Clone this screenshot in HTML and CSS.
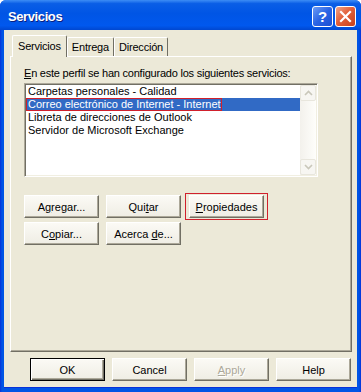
FILE: index.html
```html
<!DOCTYPE html>
<html lang="es">
<head>
    <meta charset="UTF-8">
    <title>Servicios</title>
    <link rel="stylesheet" href="styles.css">
</head>
<body>
    <div class="window">
        <!-- Title bar -->
        <div class="titlebar">
            <span class="title">Servicios</span>
            <div class="caption-buttons">
                <span class="cap-btn help">?</span>
                <span class="cap-btn close">
                    <svg width="13" height="13" viewBox="0 0 13 13">
                        <path d="M2 2 L11 11 M11 2 L2 11" stroke="#fff" stroke-width="2.2" stroke-linecap="square"/>
                    </svg>
                </span>
            </div>
        </div>

        <div class="client">
            <!-- Tabs -->
            <div class="tabs">
                <span class="tab active">Servicios</span>
                <span class="tab">Entrega</span>
                <span class="tab">Dirección</span>
            </div>

            <div class="panel">
                <div class="label"><u>E</u>n este perfil se han configurado los siguientes servicios:</div>

                <div class="listbox">
                    <ul class="items">
                        <li>Carpetas personales - Calidad</li>
                        <li class="selected"><span class="marked">Correo electrónico de Internet - Internet</span></li>
                        <li>Libreta de direcciones de Outlook</li>
                        <li>Servidor de Microsoft Exchange</li>
                    </ul>
                    <div class="scrollbar">
                        <span class="arrow">
                            <svg width="9" height="6" viewBox="0 0 9 6"><path d="M1 5 L4.5 1.5 L8 5" fill="none" stroke="#c9c7ba" stroke-width="1.6"/></svg>
                        </span>
                        <span class="track"></span>
                        <span class="arrow">
                            <svg width="9" height="6" viewBox="0 0 9 6"><path d="M1 1 L4.5 4.5 L8 1" fill="none" stroke="#c9c7ba" stroke-width="1.6"/></svg>
                        </span>
                    </div>
                </div>

                <div class="btn-row first">
                    <button>A<u>g</u>regar...</button>
                    <button>Qui<u>t</u>ar</button>
                    <button class="marked-btn"><u>P</u>ropiedades</button>
                </div>
                <div class="btn-row">
                    <button>C<u>o</u>piar...</button>
                    <button>Acerca <u>d</u>e...</button>
                </div>
            </div>

            <!-- Dialog buttons -->
            <div class="footer">
                <button class="default">OK</button>
                <button>Cancel</button>
                <button class="disabled"><u>A</u>pply</button>
                <button>Help</button>
            </div>
        </div>
    </div>
</body>
</html>
```

FILE: styles.css
```css
/* General styling */
* {
    box-sizing: border-box;
}

body {
    margin: 0;
    font-family: "Liberation Sans", Arial, sans-serif;
    font-size: 11px;
    color: #000;
    background: #fff;
}

/* Window frame */
.window {
    width: 361px;
    height: 392px;
    display: flex;
    flex-direction: column;
    background: linear-gradient(90deg, #0831d9 0px, #0055e5 2px, #0055e5 359px, #0831d9 361px);
    border-radius: 6px 6px 0 0;
    overflow: hidden;
}

.titlebar {
    height: 30px;
    display: flex;
    align-items: center;
    justify-content: space-between;
    padding: 2px 5px 0 8px;
    background: linear-gradient(180deg, #3d8df5 0%, #0a5ee6 12%, #0055e5 45%, #0058ee 85%, #0047d0 100%);
}

.title {
    color: #fff;
    font-weight: bold;
    font-size: 13px;
    letter-spacing: -0.4px;
    text-shadow: 1px 1px #0a1f80;
}

.caption-buttons {
    display: flex;
    gap: 2px;
}

.cap-btn {
    width: 21px;
    height: 21px;
    border: 1px solid #fff;
    border-radius: 3px;
    display: flex;
    align-items: center;
    justify-content: center;
    color: #fff;
    font-weight: bold;
    font-size: 15px;
}

.help {
    background: linear-gradient(135deg, #6c9cf5 0%, #2a64e4 50%, #1c4fd3 100%);
}

.close {
    background: linear-gradient(135deg, #f0a488 0%, #e2603a 45%, #c7401c 100%);
}

/* Client area */
.client {
    flex: 1;
    margin: 0 4px 4px 4px;
    background: #ece9d8;
    padding: 5px 5px 0 6px;
    display: flex;
    flex-direction: column;
    border-bottom: 1px solid #0831d9;
}

/* Tabs */
.tabs {
    display: flex;
    align-items: flex-end;
    height: 21px;
    padding-left: 2px;
}

.tab {
    height: 19px;
    padding: 3px 4px 0 4px;
    letter-spacing: -0.2px;
    border-top: 1px solid #fff;
    border-left: 1px solid #fff;
    border-right: 1px solid #716f64;
    border-radius: 2px 2px 0 0;
    background: #ece9d8;
}

.tab.active {
    height: 22px;
    margin-bottom: -1px;
    padding: 4px 5px 0 5px;
    position: relative;
    z-index: 1;
}

/* Tab panel */
.panel {
    height: 296px;
    padding: 10px 13px 0 13px;
    background: #ece9d8;
    border-top: 1px solid #fff;
    border-left: 1px solid #fff;
    border-right: 1px solid #716f64;
    border-bottom: 1px solid #716f64;
    box-shadow: inset -1px -1px #aca899;
}

.label {
    line-height: 13px;
    height: 13px;
    letter-spacing: -0.22px;
    white-space: nowrap;
}

/* List box */
.listbox {
    width: 294px;
    height: 94px;
    margin-top: 3px;
    display: flex;
    background: #fff;
    border: 1px solid;
    border-color: #aca899 #fff #fff #aca899;
    box-shadow: inset 1px 1px #716f64, inset -1px -1px #f1efe2;
    padding: 1px;
}

.items {
    flex: 1;
    list-style: none;
    margin: 0;
    padding: 0;
}

.items li {
    height: 13px;
    line-height: 13px;
    white-space: nowrap;
}

.items li.selected {
    background: #316ac5;
    color: #fff;
}

.marked {
    display: inline-block;
    height: 13px;
    padding: 0 1px 0 2px;
    box-shadow: inset 0 0 0 1px #d0202c;
}

.items li:not(.selected) {
    padding-left: 2px;
}

.scrollbar {
    width: 16px;
    display: flex;
    flex-direction: column;
    background: linear-gradient(90deg, #f3f1ec, #fefefb);
}

.scrollbar .arrow {
    height: 16px;
    display: flex;
    align-items: center;
    justify-content: center;
    border: 1px solid #e8e6dd;
    border-radius: 2px;
    background: #f7f6f2;
}

.scrollbar .track {
    flex: 1;
}

/* Buttons */
button {
    width: 75px;
    height: 23px;
    font-family: "Liberation Sans", Arial, sans-serif;
    font-size: 11px;
    color: #000;
    padding: 0;
    background: linear-gradient(180deg, #fbfaf5, #efede4);
    border: 1px solid;
    border-color: #fff #716f64 #716f64 #fff;
    box-shadow: inset -1px -1px #aca899;
}

.btn-row {
    display: flex;
    gap: 7px;
    margin-top: 4px;
}

.btn-row.first {
    margin-top: 18px;
}

.marked-btn {
    position: relative;
    margin-left: 1px;
}

.marked-btn::after {
    content: "";
    position: absolute;
    top: -3px;
    bottom: -3px;
    left: -5px;
    right: -5px;
    border: 1px solid #d0202c;
}

.footer {
    display: flex;
    justify-content: flex-end;
    gap: 7px;
    margin-top: 6px;
    padding-right: 1px;
}

.footer .default {
    border: 1px solid #000;
    box-shadow: inset 1px 1px #fff, inset -1px -1px #716f64, inset -2px -2px #aca899;
}

.footer .disabled {
    color: #aca899;
    text-shadow: 1px 1px #fff;
}
```
